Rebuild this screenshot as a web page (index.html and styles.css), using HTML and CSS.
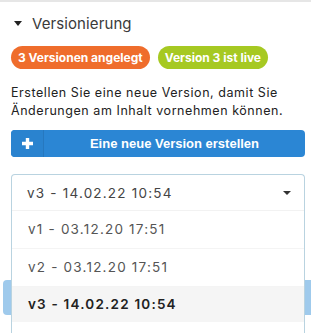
FILE: index.html
```html
<!DOCTYPE html>
<html>
<head>
    <title>Versionierung</title>
    <meta charset="UTF-8">
    <link rel="stylesheet" href="styles.css">
</head>
<body>
    <div class="panel">
        <div class="panel-head">
            <span class="toggle"></span>
            <span class="panel-title">Versionierung</span>
        </div>

        <div class="badges">
            <span class="badge badge-orange">3 Versionen angelegt</span>
            <span class="badge badge-green">Version 3 ist live</span>
        </div>

        <p class="hint">Erstellen Sie eine neue Version, damit Sie Änderungen am Inhalt vornehmen können.</p>

        <button class="new-btn">
            <span class="new-btn-icon">
                <svg width="11" height="11" viewBox="0 0 11 11"><path d="M3.8 0h3.4v3.8H11v3.4H7.2V11H3.8V7.2H0V3.8h3.8z" fill="#fff"/></svg>
            </span>
            <span class="new-btn-text">Eine neue Version erstellen</span>
        </button>

        <div class="select-wrap">
            <div class="under-btn"></div>
            <div class="select">
                <div class="select-current">
                    <span>v3 - 14.02.22 10:54</span>
                    <span class="caret"></span>
                </div>
                <div class="option">v1 - 03.12.20 17:51</div>
                <div class="option">v2 - 03.12.20 17:51</div>
                <div class="option selected">v3 - 14.02.22 10:54</div>
                <div class="option-empty"></div>
            </div>
        </div>
    </div>
</body>
</html>
```

FILE: styles.css
```css
body {
    margin: 0;
    font-family: Inter, 'Open Sans', sans-serif;
    color: #333;
    background: #fff;
    overflow: hidden;
}

.panel {
    border-top: 2px solid #e6e6e6;
    padding: 0 6px 0 11px;
}

.panel-head {
    display: flex;
    align-items: center;
    height: 40px;
    padding-left: 3px;
    padding-top: 2px;
    box-sizing: border-box;
}

.toggle {
    width: 0;
    height: 0;
    border-left: 4px solid transparent;
    border-right: 4px solid transparent;
    border-top: 5px solid #222;
    margin-right: 10px;
}

.panel-title {
    font-size: 15px;
    color: #3a3a3a;
    letter-spacing: 0.1px;
}

.badges {
    display: flex;
    gap: 8px;
    margin-top: 4px;
}

.badge {
    display: inline-block;
    color: #fff;
    font-weight: 700;
    font-size: 12px;
    line-height: 23px;
    padding: 0 7px;
    border-radius: 12px;
}

.badge-orange {
    background: #ef6d2c;
}

.badge-green {
    background: #a6c922;
}

.hint {
    margin: 15px 0 10px;
    font-size: 12.5px;
    line-height: 18px;
    letter-spacing: 0.55px;
    color: #222;
}

.new-btn {
    display: flex;
    width: 100%;
    height: 27px;
    padding: 0;
    border: none;
    border-radius: 4px;
    background: #2b86d4;
    color: #fff;
    overflow: hidden;
    cursor: pointer;
}

.new-btn-icon {
    width: 32px;
    display: flex;
    align-items: center;
    justify-content: center;
    border-right: 1px solid #2678bf;
    background: #2a83cf;
}

.new-btn-text {
    flex: 1;
    align-self: center;
    font-family: 'Liberation Sans', Arial, sans-serif;
    font-weight: 700;
    font-size: 13px;
}

.select-wrap {
    position: relative;
    margin-top: 17px;
}

.under-btn {
    position: absolute;
    left: -8px;
    right: -10px;
    top: 106px;
    height: 35px;
    border-radius: 4px;
    background: #9fcaec;
}

.select {
    position: relative;
    border: 1px solid #b9d3e0;
    border-bottom: none;
    border-radius: 4px 4px 0 0;
    background: #fff;
    font-size: 13.5px;
    letter-spacing: 1.2px;
}

.select-current {
    display: flex;
    align-items: center;
    justify-content: space-between;
    height: 35px;
    padding: 0 13px 0 15px;
    color: #444;
    border-bottom: 1px solid #f2f2f2;
}

.caret {
    width: 0;
    height: 0;
    border-left: 4px solid transparent;
    border-right: 4px solid transparent;
    border-top: 4px solid #333;
}

.option {
    height: 37px;
    line-height: 37px;
    padding-left: 16px;
    color: #555;
    border-bottom: 1px solid #f4f4f4;
}

.option.selected {
    background: #f5f5f5;
    color: #222;
    font-weight: 600;
    height: 35px;
    line-height: 35px;
    border-bottom: none;
}

.option-empty {
    height: 20px;
}
```
